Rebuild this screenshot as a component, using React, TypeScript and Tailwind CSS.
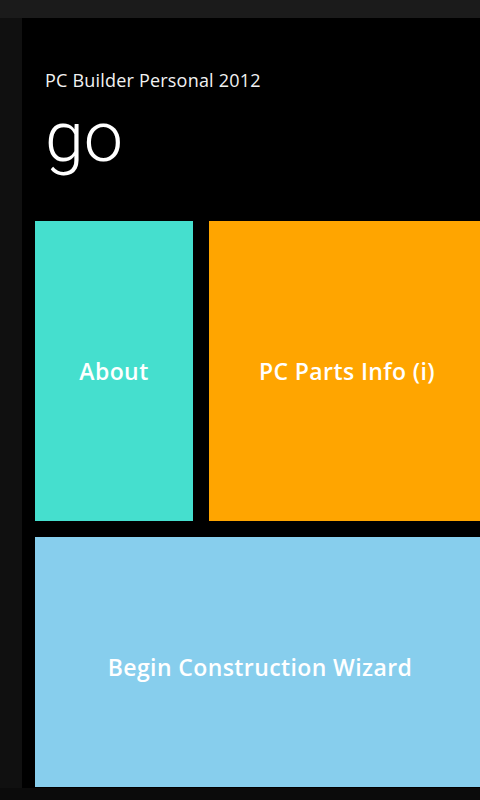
export default function App() {
  return (
    <div className="w-[480px] h-[800px] overflow-hidden bg-[#0b0b0b] font-['Open_Sans','Noto_Sans',sans-serif]">
      <div className="h-[18px] bg-[#1b1b1b]" />
      <div className="flex h-[770px]">
        <div className="w-[22px] shrink-0 bg-[#101010]" />
        <main className="flex-1 bg-black overflow-hidden pl-[13px]">
          {/* Header */}
          <div className="pl-[10px] pt-[53px]">
            <p className="text-[18px] tracking-[0.2px] leading-none text-[#f2f2f2]">PC Builder Personal 2012</p>
            <h1 className="mt-[13px] font-['Roboto','Inter',sans-serif] text-[70px] font-light leading-none text-white">
              go
            </h1>
          </div>

          {/* Tiles */}
          <div className="mt-[49px] flex flex-col gap-[16px] w-[450px]">
            <div className="flex gap-[16px] h-[300px]">
              <button
                type="button"
                className="w-[158px] shrink-0 bg-[#45dfce] flex items-center justify-center text-[23px] tracking-[0.4px] font-semibold text-white"
              >
                About
              </button>
              <button
                type="button"
                className="flex-1 bg-[#ffa500] flex items-center justify-center text-[23px] tracking-[0.4px] font-semibold text-white"
              >
                PC Parts Info (i)
              </button>
            </div>
            <button
              type="button"
              className="h-[250px] pt-[10px] bg-[#87ceed] flex items-center justify-center text-[23px] tracking-[0.4px] font-semibold text-white"
            >
              Begin Construction Wizard
            </button>
          </div>
        </main>
      </div>
    </div>
  )
}
